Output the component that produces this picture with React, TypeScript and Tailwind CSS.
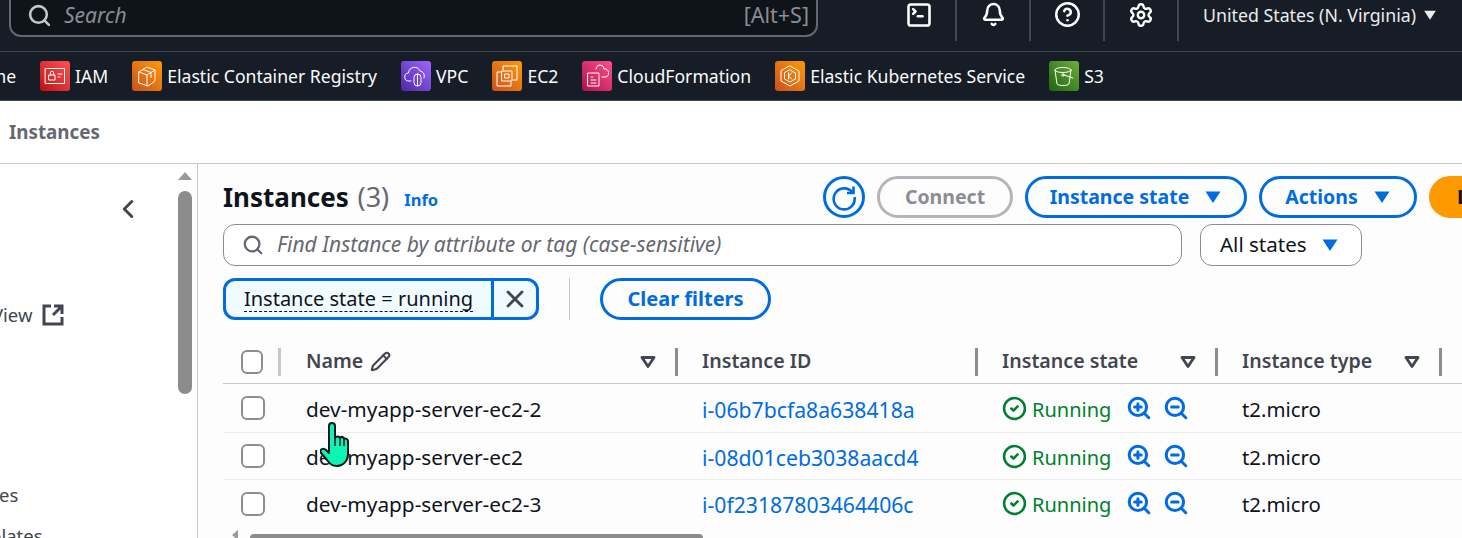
import { Bell, ChevronLeft, CircleCheck, CircleHelp, Pencil, Search, Settings, SquareTerminal, X, ZoomIn, ZoomOut } from 'lucide-react';

const FONT = "font-['Noto_Sans',sans-serif]";

const SERVICES = [
    { label: 'Home', tile: 'bg-linear-to-tr from-[#4d27a8] to-[#a166ff]', glyph: 'home' },
    { label: 'IAM', tile: 'bg-linear-to-tr from-[#bd0816] to-[#ff5252]', glyph: 'iam' },
    { label: 'Elastic Container Registry', tile: 'bg-linear-to-tr from-[#c8511b] to-[#ff9900]', glyph: 'ecr' },
    { label: 'VPC', tile: 'bg-linear-to-tr from-[#4d27a8] to-[#a166ff]', glyph: 'vpc' },
    { label: 'EC2', tile: 'bg-linear-to-tr from-[#c8511b] to-[#ff9900]', glyph: 'ec2' },
    { label: 'CloudFormation', tile: 'bg-linear-to-tr from-[#b0084d] to-[#ff4f8b]', glyph: 'cf' },
    { label: 'Elastic Kubernetes Service', tile: 'bg-linear-to-tr from-[#c8511b] to-[#ff9900]', glyph: 'eks' },
    { label: 'S3', tile: 'bg-linear-to-tr from-[#1b660f] to-[#6cae3e]', glyph: 's3' },
];

const ROWS = [
    { name: 'dev-myapp-server-ec2-2', id: 'i-06b7bcfa8a638418a', h: 'h-[49px]' },
    { name: 'dev-myapp-server-ec2', id: 'i-08d01ceb3038aacd4', h: 'h-[47px]' },
    { name: 'dev-myapp-server-ec2-3', id: 'i-0f23187803464406c', h: 'h-[47px]' },
];

const COLS = 'grid grid-cols-[58px_396px_300px_240px_224px_42px] items-center';

function Glyph({ kind }: { kind: string }) {
    const common = { fill: 'none', stroke: 'white', strokeWidth: 1, strokeLinejoin: 'round' as const, strokeLinecap: 'round' as const };
    return (
        <svg width="30" height="30" viewBox="0 0 30 30" {...common}>
            {kind === 'iam' && (
                <>
                    <rect x="5.5" y="7.5" width="19" height="15" />
                    <rect x="9" y="14" width="6" height="5" />
                    <path d="M10.3 14v-2a1.7 1.7 0 0 1 3.4 0v2M18 13h4M18 16h2" />
                </>
            )}
            {kind === 'ecr' && (
                <>
                    <path d="M7 11l8-5 8 3v11l-7 5-9-3z" />
                    <path d="M7 11l8 3v11M15 14l8-5M11 8.500l8 3v5" />
                </>
            )}
            {kind === 'vpc' && (
                <>
                    <path d="M10 20H8a4 4 0 0 1-.5-8 6 6 0 0 1 11.500-2 5 5 0 0 1 4 7" />
                    <rect x="13" y="13" width="7" height="12" rx="3.500" />
                    <path d="M16.500 13v12" />
                </>
            )}
            {kind === 'ec2' && (
                <>
                    <path d="M11 9V5h14v14h-4" />
                    <path d="M9 11H5v14h14v-4" />
                    <rect x="10" y="10" width="10" height="10" />
                    <rect x="13" y="13" width="4" height="4" />
                </>
            )}
            {kind === 'cf' && (
                <>
                    <rect x="6" y="12" width="11" height="13" />
                    <path d="M9 16h2M9 19h5M9 22h5M14 8a4 4 0 0 1 8 0 4 4 0 0 1 1 8h-3" />
                </>
            )}
            {kind === 'eks' && (
                <>
                    <path d="M15 5l9 5v10l-9 5-9-5V10z" />
                    <path d="M15 9l5.500 3v6L15 21l-5.500-3v-6z" />
                    <path d="M13.500 12v6M16.500 12l-3 3 3 3" />
                </>
            )}
            {kind === 's3' && (
                <>
                    <ellipse cx="14" cy="9" rx="8" ry="2.500" />
                    <path d="M6 9l2 14c1 2 11 2 12 0l2-14" />
                    <circle cx="14" cy="14" r="1.200" />
                    <path d="M15 14l9 3" />
                </>
            )}
        </svg>
    );
}

function Caret({ className }: { className: string }) {
    return (
        <svg width="18" height="14" viewBox="0 0 18 14" className={className}>
            <path d="M1.500 1.500h15L9 13z" fill="currentColor" />
        </svg>
    );
}

function SortCaret() {
    return (
        <svg width="16" height="12" viewBox="0 0 16 12" className="shrink-0 text-[#424650]">
            <path d="M2 1.500h12L8 10.500z" fill="none" stroke="currentColor" strokeWidth="2.800" strokeLinejoin="round" />
        </svg>
    );
}

function Box() {
    return <span className="block w-6 h-6 rounded-md border-2 border-[#8c8c94] bg-white" />;
}

function Sep() {
    return <span className="w-[2px] h-[41px] bg-[#424650]" />;
}

function Btn({ className, children }: { className: string; children: React.ReactNode }) {
    return (
        <span className={`h-[42px] rounded-full border-[3px] flex items-center justify-center text-[19.500px] font-bold whitespace-nowrap ${className}`}>
            {children}
        </span>
    );
}

function HeadCell({ label, extra, sort }: { label: string; extra?: React.ReactNode; sort?: boolean }) {
    return (
        <div className="pl-[25px] flex items-center whitespace-nowrap">
            <span className="-mt-[2px]">{label}</span>
            {extra}
            <span className="flex-1" />
            {sort && <SortCaret />}
            <span className={`w-[3px] h-7 bg-[#8c8c94] shrink-0 -mr-px ${sort ? 'ml-[19px]' : ''}`} />
        </div>
    );
}

export default function App() {
    return (
        <div className={`${FONT} relative w-[1462px] h-[538px] overflow-hidden bg-white`}>
            {/* Top bar */}
            <header className="h-[52px] bg-[#161d26] border-b border-[#424650] flex items-start text-white">
                <div className="w-[809px] h-[46px] -mt-[9px] ml-[9px] rounded-b-xl border-2 border-[#656871] bg-[#0f141a] flex items-center pl-4 pr-[7px] pt-[3px] shrink-0">
                    <Search size={25} strokeWidth={2.500} className="text-[#c6c6cd]" />
                    <span className="ml-3 text-[21px] italic text-[#8c8c94]">Search</span>
                    <span className="ml-auto text-[21.500px] text-[#8c8c94]">[Alt+S]</span>
                </div>
                <div className="flex h-[41px] ml-[65px] items-center">
                    <span className="w-[72px] flex justify-center -mt-[12px]"><SquareTerminal size={28} strokeWidth={2.200} /></span>
                    <Sep />
                    <span className="w-[72px] flex justify-center -mt-[12px]"><Bell size={25} strokeWidth={2.400} /></span>
                    <Sep />
                    <span className="w-[72px] flex justify-center -mt-[12px]"><CircleHelp size={27} strokeWidth={2.200} /></span>
                    <Sep />
                    <span className="w-[72px] flex justify-center -mt-[12px]"><Settings size={26} strokeWidth={2.200} /></span>
                    <Sep />
                </div>
                <div className="ml-[24px] h-[30px] flex items-center text-[17.750px] text-[#e9ebed] whitespace-nowrap">
                    United States (N. Virginia)
                    <Caret className="ml-[7px] w-[14px] text-[#e9ebed]" />
                </div>
            </header>

            {/* Favourites bar */}
            <nav className="h-[49px] bg-[#161d26] border-b border-[#424650] flex items-center gap-[24px] -ml-[69px] text-[#fbfbfb] text-[17.600px] whitespace-nowrap">
                {SERVICES.map(s => (
                    <span key={s.label} className="flex items-center gap-[5px] shrink-0">
                        <span className={`w-[30px] h-[30px] rounded-[3px] ${s.tile}`}><Glyph kind={s.glyph} /></span>
                        {s.label}
                    </span>
                ))}
            </nav>

            {/* Breadcrumb */}
            <div className="h-[63px] border-b border-[#c6c6cd] pl-[9px] flex items-center">
                <span className="text-[18.800px] font-bold text-[#656871]">Instances</span>
            </div>

            <div className="flex h-[375px]">
                {/* Side nav, cut off on the left */}
                <aside className="w-[198px] shrink-0 border-r border-[#c6c6cd] flex bg-white overflow-hidden">
                    <div className="flex-1 relative text-[18.500px] text-[#424650] overflow-hidden">
                        <div className="flex justify-end pr-[30px] pt-[30px]">
                            <ChevronLeft size={30} strokeWidth={2.400} />
                        </div>
                        <div className="mt-[77px] flex items-center -ml-[8px] gap-[9px]">
                            <span>View</span>
                            <svg width="24" height="24" viewBox="0 0 24 24" fill="none" stroke="currentColor" strokeWidth="3">
                                <path d="M10 3H3v18h18v-7M13 3h8v8M21 3l-9 9" />
                            </svg>
                        </div>
                        <div className="mt-[154px] -ml-[1px] leading-[24px]">es</div>
                        <div className="mt-[17px] -ml-[10px] leading-[24px] whitespace-nowrap">plates</div>
                    </div>
                    <div className="w-[24px] shrink-0 flex flex-col items-center pt-[7px]">
                        <svg width="16" height="10" viewBox="0 0 16 10"><path d="M8 1l7 8H1z" fill="#9a9a9a" /></svg>
                        <span className="mt-[10px] w-[14px] h-[203px] rounded-full bg-[#8c8c8c]" />
                    </div>
                </aside>

                {/* Content */}
                <main className="flex-1 min-w-0 bg-[#fdfdfd] pl-[25px] pt-[12px] overflow-hidden">
                    <div className="w-[1266px] flex items-center h-[42px]">
                        <h1 className="text-[26px] font-bold text-[#0f141a] leading-none whitespace-nowrap -mt-[2px]">
                            Instances <span className="font-normal text-[#656871] ml-[2px] text-[27px]">(3)</span>
                        </h1>
                        <span className="ml-[15px] mt-[6px] text-[16.500px] font-bold text-[#006ce0]">Info</span>
                        <div className="flex-1" />
                        <div className="flex items-center gap-[12px]">
                            <span className="w-[42px] h-[42px] rounded-full border-[3px] border-[#006ce0] flex items-center justify-center text-[#006ce0]">
                                <svg width="28" height="28" viewBox="0 0 28 28" fill="none" stroke="currentColor" strokeWidth="2.600">
                                    <path d="M22.500 9.500A10.500 10.500 0 1 0 24.500 14" />
                                    <path d="M23.500 3.500v6.500H17" />
                                </svg>
                            </span>
                            <Btn className="w-[136px] border-[#b4b4bb] text-[#8c8c94]">Connect</Btn>
                            <Btn className="w-[222px] border-[#006ce0] text-[#006ce0]">
                                Instance state<Caret className="ml-[15px] text-[#006ce0]" />
                            </Btn>
                            <Btn className="w-[158px] border-[#006ce0] text-[#006ce0]">
                                Actions<Caret className="ml-[15px] text-[#006ce0]" />
                            </Btn>
                            <Btn className="w-[60px] bg-[#ff9900] border-[#ff9900] text-[#0f141a] justify-start pl-[25px]">L</Btn>
                        </div>
                    </div>

                    <div className="mt-[6px] flex items-center gap-[18px]">
                        <div className="w-[959px] h-[42px] rounded-xl border border-[#8c8c94] bg-white flex items-center pl-[18px]">
                            <Search size={22} strokeWidth={2.500} className="text-[#656871]" />
                            <span className="ml-[13px] text-[21px] italic text-[#656871] whitespace-nowrap">Find Instance by attribute or tag (case-sensitive)</span>
                        </div>
                        <div className="w-[162px] h-[42px] rounded-xl border border-[#8c8c94] bg-white flex items-center pl-[19px] text-[20.500px] text-[#0f141a] whitespace-nowrap">
                            <span className="-mt-[2px]">All states</span><Caret className="ml-[14px] text-[#006ce0]" />
                        </div>
                    </div>

                    <div className="mt-[12px] flex items-center">
                        <div className="w-[316px] h-[42px] rounded-xl border-[3px] border-[#006ce0] bg-[#f0fbff] flex overflow-hidden">
                            <span className="w-[268px] flex items-center justify-center border-r-[3px] border-[#006ce0] text-[20px] text-[#0f141a] whitespace-nowrap">
                                <span className="border-b border-dashed border-[#0f141a] leading-[25px]">Instance state = running</span>
                            </span>
                            <span className="flex-1 flex items-center justify-center text-[#424650]"><X size={28} strokeWidth={2.400} /></span>
                        </div>
                        <span className="ml-[30px] w-px h-[42px] bg-[#c6c6cd]" />
                        <div className="ml-[30px]"><Btn className="w-[171px] border-[#006ce0] text-[#006ce0] text-[20px]">Clear filters</Btn></div>
                    </div>

                    {/* Table */}
                    <div className="mt-[20px] w-[1260px]">
                        <div className={`h-[44px] border-b border-[#c6c6cd] ${COLS} text-[19.600px] font-semibold text-[#424650]`}>
                            <div className="flex items-center pl-[18px]">
                                <Box />
                                <span className="ml-[15px] w-[3px] h-7 bg-[#c6c6cd]" />
                            </div>
                            <HeadCell label="Name" extra={<Pencil size={21} strokeWidth={2.400} className="ml-[7px]" />} sort />
                            <HeadCell label="Instance ID" />
                            <HeadCell label="Instance state" sort />
                            <HeadCell label="Instance type" sort />
                        </div>
                        {ROWS.map((r, i) => (
                            <div key={r.id} className={`${r.h} ${i < 2 ? 'border-b border-[#e9ebed]' : ''} ${COLS} text-[20.800px] text-[#0f141a]`}>
                                <div className="pl-[18px]"><Box /></div>
                                <div className="pl-[25px] mt-[3px] whitespace-nowrap">{r.name}</div>
                                <div className="pl-[25px] mt-[3px] text-[#006ce0] whitespace-nowrap text-[21.200px]">{r.id}</div>
                                <div className="pl-[25px] flex items-center">
                                    <CircleCheck size={25} strokeWidth={2.400} className="text-[#00802f] shrink-0" />
                                    <span className="ml-[5px] text-[#00802f] mt-[3px] text-[20px]">Running</span>
                                    <ZoomIn size={26} strokeWidth={2.800} className="ml-[15px] -mt-[1px] text-[#006ce0]" />
                                    <ZoomOut size={26} strokeWidth={2.800} className="ml-[11px] -mt-[1px] text-[#006ce0]" />
                                </div>
                                <div className="pl-[25px] mt-[2px] text-[20.400px]">t2.micro</div>
                            </div>
                        ))}
                        <div className="flex items-center h-[11px] pl-[8px] mt-[2px]">
                            <svg width="8" height="10" viewBox="0 0 8 10"><path d="M1 5l6-5v10z" fill="#9a9a9a" /></svg>
                            <span className="ml-[11px] mt-[7px] w-[453px] h-[8px] rounded-full bg-[#8c8c8c]" />
                        </div>
                    </div>
                </main>
            </div>

            {/* Pointer */}
            <svg width="30" height="46" viewBox="0 0 30 46" className="absolute left-[320px] top-[422px]">
                <path
                    d="M9 4c0-4 6-4 6 0v12c1-2 4-2 5 0 1-2 4-1 4 1 1-1 4 0 4 2v13c0 7-5 12-11 12-5 0-7-2-10-6l-6-7c-2-3 2-6 5-3l3 3z"
                    fill="#0df5b5"
                    stroke="#0b1a1a"
                    strokeWidth="2"
                    strokeLinejoin="round"
                />
                <path d="M15 16v8M20 16v8M24 18v6" stroke="#0b1a1a" strokeWidth="1.500" fill="none" />
            </svg>
        </div>
    );
}
